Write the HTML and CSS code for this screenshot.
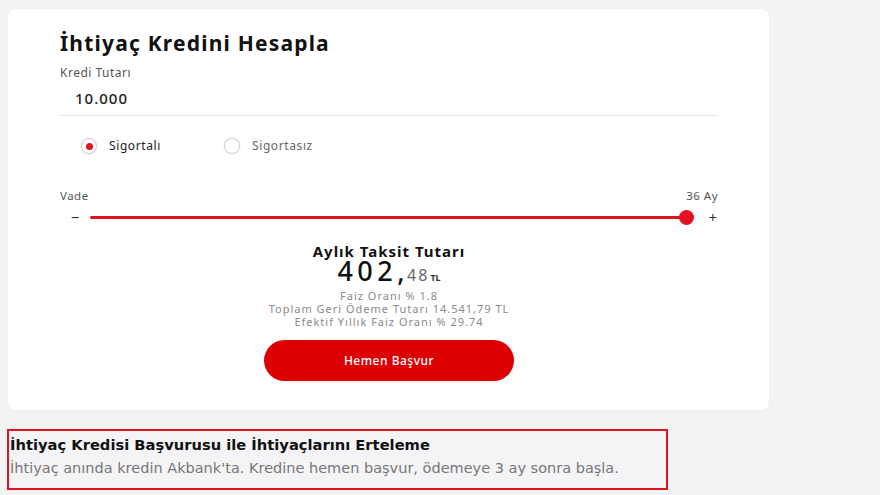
FILE: index.html
```html
<!DOCTYPE html>
<html lang="tr">
<head>
<meta charset="utf-8">
<link rel="stylesheet" href="styles.css">
</head>
<body>
<section class="card">
  <h1 class="title">İhtiyaç Kredini Hesapla</h1>
  <div class="field">
    <label class="field-label">Kredi Tutarı</label>
    <div class="field-input">10.000</div>
  </div>
  <div class="radios">
    <div class="radio checked"><span class="dot"></span><span class="radio-label">Sigortalı</span></div>
    <div class="radio"><span class="dot"></span><span class="radio-label">Sigortasız</span></div>
  </div>
  <div class="vade">
    <div class="vade-head"><span>Vade</span><span>36 Ay</span></div>
    <div class="slider">
      <span class="sign minus">−</span>
      <div class="track"><span class="thumb"></span></div>
      <span class="sign plus">+</span>
    </div>
  </div>
  <div class="result">
    <div class="result-title">Aylık Taksit Tutarı</div>
    <div class="amount"><span class="int">402,</span><span class="dec">48</span><span class="cur">TL</span></div>
    <div class="details">
      <div>Faiz Oranı % 1.8</div>
      <div>Toplam Geri Ödeme Tutarı 14.541,79 TL</div>
      <div>Efektif Yıllık Faiz Oranı % 29.74</div>
    </div>
    <button class="apply">Hemen Başvur</button>
  </div>
</section>
<section class="info">
  <h2 class="info-title">İhtiyaç Kredisi Başvurusu ile İhtiyaçlarını Erteleme</h2>
  <p class="info-text">İhtiyaç anında kredin Akbank'ta. Kredine hemen başvur, ödemeye 3 ay sonra başla.</p>
</section>
</body>
</html>
```
FILE: styles.css
```css
html, body { margin: 0; padding: 0; }
body {
  background: #f3f3f3;
  font-family: "Noto Sans", "DejaVu Sans", sans-serif;
  color: #1a1a1a;
  padding: 9px 8px 0 8px;
  width: 880px;
  box-sizing: border-box;
  height: 495px;
  overflow: hidden;
}
.card {
  width: 761px;
  height: 401px;
  box-sizing: border-box;
  background: #fff;
  border-radius: 8px;
  box-shadow: 0 0 3px rgba(0, 0, 0, 0.04);
  padding: 20px 51px 0 52px;
}
.title {
  margin: 0;
  font-size: 21px;
  font-weight: 700;
  line-height: 28px;
  letter-spacing: 1.2px;
  color: #111;
}
.field { margin-top: 9px; }
.field-label {
  display: block;
  font-size: 12px;
  line-height: 14px;
  letter-spacing: 0.5px;
  color: #555;
}
.field-input {
  margin-top: 9px;
  padding: 0 0 8px 15px;
  font-size: 15px;
  font-weight: 500;
  line-height: 18px;
  color: #222;
  letter-spacing: 1px;
  border-bottom: 1px solid #e6e6e6;
}
.radios {
  display: flex;
  margin-top: 22px;
  padding-left: 21px;
}
.radio {
  display: flex;
  align-items: center;
  width: 143px;
  font-size: 12px;
  letter-spacing: 0.6px;
  color: #666;
}
.radio.checked { color: #222; }
.dot {
  width: 16px;
  height: 16px;
  border-radius: 50%;
  border: 1px solid #d4d4d4;
  box-sizing: border-box;
  background: #fff;
  position: relative;
  margin-right: 12px;
  box-shadow: 0 0 2px rgba(0, 0, 0, 0.12);
}
.radio.checked .dot { border-color: #e2c9cb; }
.radio.checked .dot::after {
  content: "";
  position: absolute;
  left: 3.5px; top: 3.5px;
  width: 7px; height: 7px;
  border-radius: 50%;
  background: #e11322;
}
.radio-label { line-height: 16px; }
.vade { margin-top: 35px; }
.vade-head {
  display: flex;
  justify-content: space-between;
  font-size: 11.5px;
  line-height: 14px;
  letter-spacing: 0.5px;
  color: #555;
}
.slider {
  display: flex;
  align-items: center;
  margin-top: 6px;
  height: 16px;
}
.sign {
  font-size: 15px;
  line-height: 16px;
  color: #333;
}
.minus { width: 30px; text-align: center; }
.plus { width: 31px; text-align: right; padding-right: 1px; box-sizing: border-box; }
.track {
  flex: 1;
  height: 3px;
  background: #e11322;
  border-radius: 2px;
  position: relative;
}
.thumb {
  position: absolute;
  right: -7px;
  top: -6px;
  width: 15px;
  height: 15px;
  border-radius: 50%;
  background: #e11322;
}
.result {
  display: flex;
  flex-direction: column;
  align-items: center;
  margin-top: 17px;
}
.result-title {
  font-size: 15px;
  font-weight: 700;
  line-height: 18px;
  letter-spacing: 1px;
  color: #111;
}
.amount {
  display: flex;
  align-items: baseline;
  height: 28px;
  line-height: 28px;
  margin-top: -3px;
}
.int { font-size: 27px; font-weight: 500; color: #111; letter-spacing: 4.5px; }
.dec { font-size: 16px; color: #666; letter-spacing: 2px; margin-left: -2px; }
.cur { font-size: 9px; font-weight: 700; color: #333; margin-left: 1px; }
.details {
  margin-top: 4px;
  text-align: center;
  font-size: 11px;
  line-height: 13px;
  letter-spacing: 1px;
  color: #8a8a8a;
}
.apply {
  margin-top: 12px;
  width: 250px;
  height: 41px;
  border: none;
  border-radius: 21px;
  background: #dc0005;
  color: #fff;
  font-family: "Noto Sans", sans-serif;
  font-size: 12px;
  letter-spacing: 0.5px;
  font-weight: 500;
}
.info {
  margin-top: 19px;
  width: 661px;
  height: 61px;
  box-sizing: border-box;
  margin-left: -1px;
  border: 2px solid #e0141e;
  background: #f4f4f6;
  padding: 4px 0 0 1px;
  font-family: "DejaVu Sans", "Noto Sans", sans-serif;
}
.info-title {
  margin: 0;
  font-size: 14.7px;
  font-weight: 700;
  line-height: 20px;
  color: #111;
}
.info-text {
  margin: 3px 0 0 0;
  font-size: 14.5px;
  line-height: 20px;
  color: #777;
}
```
